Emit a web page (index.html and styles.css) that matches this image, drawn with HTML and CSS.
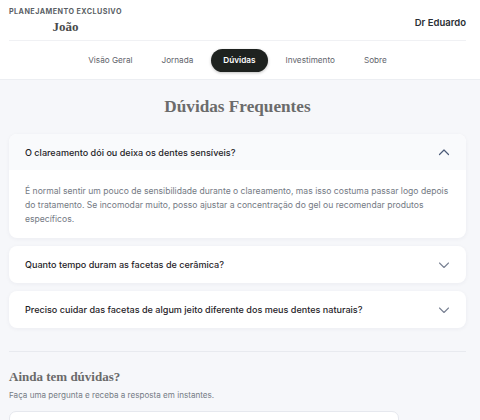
FILE: index.html
```html
<!DOCTYPE html>
<html lang="pt">
<head>
<meta charset="utf-8">
<link rel="stylesheet" href="styles.css">
</head>
<body>
<header class="header">
  <div class="top">
    <div class="brand">
      <div class="eyebrow">PLANEJAMENTO EXCLUSIVO</div>
      <div class="name">João</div>
    </div>
    <div class="doctor">Dr Eduardo</div>
  </div>
  <nav class="nav">
    <a class="tab">Visão Geral</a>
    <a class="tab">Jornada</a>
    <a class="tab active">Dúvidas</a>
    <a class="tab">Investimento</a>
    <a class="tab">Sobre</a>
  </nav>
</header>
<main class="main">
  <h1 class="title">Dúvidas Frequentes</h1>
  <div class="faq">
    <div class="card open">
      <div class="q">
        <span>O clareamento dói ou deixa os dentes sensíveis?</span>
        <svg class="chev" width="12" height="8" viewBox="0 0 12 8"><path d="M1.5 6.5 L6 2 L10.5 6.5" fill="none" stroke="#4b5a78" stroke-width="1.2" stroke-linecap="round" stroke-linejoin="round"/></svg>
      </div>
      <div class="a">É normal sentir um pouco de sensibilidade durante o clareamento, mas isso costuma passar logo depois do tratamento. Se incomodar muito, posso ajustar a concentração do gel ou recomendar produtos específicos.</div>
    </div>
    <div class="card">
      <div class="q">
        <span>Quanto tempo duram as facetas de cerâmica?</span>
        <svg class="chev" width="12" height="8" viewBox="0 0 12 8"><path d="M1.5 2 L6 6.5 L10.5 2" fill="none" stroke="#7a8294" stroke-width="1.1" stroke-linecap="round" stroke-linejoin="round"/></svg>
      </div>
    </div>
    <div class="card">
      <div class="q">
        <span>Preciso cuidar das facetas de algum jeito diferente dos meus dentes naturais?</span>
        <svg class="chev" width="12" height="8" viewBox="0 0 12 8"><path d="M1.5 2 L6 6.5 L10.5 2" fill="none" stroke="#7a8294" stroke-width="1.1" stroke-linecap="round" stroke-linejoin="round"/></svg>
      </div>
    </div>
  </div>
  <hr class="divider">
  <section class="ask">
    <h2 class="ask-title">Ainda tem dúvidas?</h2>
    <p class="ask-sub">Faça uma pergunta e receba a resposta em instantes.</p>
    <div class="input"></div>
  </section>
</main>
</body>
</html>
```
FILE: styles.css
```css
* { box-sizing: border-box; }
html, body { margin: 0; padding: 0; }
body {
  background: #f6f7fa;
  font-family: "Inter", "Noto Sans", sans-serif;
  color: #1f2328;
  width: 480px;
  height: 420px;
  overflow: hidden;
}
.header {
  background: #ffffff;
  padding: 0 14px 0 9px;
  border-bottom: 1px solid #eceef2;
}
.top {
  height: 41px;
  display: flex;
  justify-content: space-between;
  align-items: center;
  border-bottom: 1px solid #f0f1f4;
}
.brand {
  display: flex;
  flex-direction: column;
  align-items: center;
  padding-top: 2px;
}
.eyebrow {
  font-size: 7.2px;
  font-weight: 700;
  letter-spacing: 0.45px;
  color: #5a5f66;
  line-height: 10px;
}
.name {
  font-family: "Liberation Serif", "DejaVu Serif", serif;
  font-weight: 700;
  font-size: 13px;
  color: #4a4a4a;
  line-height: 16px;
  margin-top: 2px;
}
.doctor {
  font-size: 9.5px;
  font-weight: 600;
  color: #2a2d33;
  padding-top: 4px;
}
.nav {
  height: 38px;
  display: flex;
  justify-content: center;
  align-items: center;
  gap: 7px;
}
.tab {
  font-size: 8.2px;
  color: #5f646c;
  padding: 0 11px;
  height: 23px;
  line-height: 23px;
  border-radius: 12px;
}
.tab.active {
  background: #1e221f;
  color: #ffffff;
  font-weight: 600;
  padding: 0 12px;
  box-shadow: 0 1px 3px rgba(0,0,0,0.25);
}
.main {
  padding: 0 14px 0 9px;
}
.title {
  margin: 0;
  height: 54px;
  line-height: 54px;
  text-align: center;
  font-family: "Liberation Serif", "DejaVu Serif", serif;
  font-weight: 700;
  font-size: 17.2px;
  color: #6b6b6b;
}
.faq {
  display: flex;
  flex-direction: column;
  gap: 8px;
}
.card {
  background: #ffffff;
  border-radius: 8px;
  box-shadow: 0 1px 4px rgba(30,40,70,0.05);
  overflow: hidden;
}
.q {
  height: 37px;
  padding: 0 16px;
  display: flex;
  justify-content: space-between;
  align-items: center;
  font-size: 9.07px;
  font-weight: 500;
  color: #1f2328;
}
.card.open .q { background: #f9fafc; height: 36px; }
.a {
  padding: 14px 16px 12px;
  font-size: 8.6px;
  line-height: 14px;
  color: #747a84;
}
.divider {
  border: 0;
  border-top: 1px solid #e8eaef;
  margin: 23px 0 0;
}
.ask { padding-top: 16px; }
.ask-title {
  margin: 0;
  font-family: "Liberation Serif", "DejaVu Serif", serif;
  font-size: 13px;
  font-weight: 700;
  color: #6a6a6a;
  line-height: 18px;
}
.ask-sub {
  margin: 3px 0 0;
  font-size: 8.1px;
  color: #757b85;
  line-height: 12px;
}
.input {
  margin-top: 10px;
  width: 390px;
  height: 30px;
  background: #ffffff;
  border: 1px solid #e6e8ee;
  border-radius: 7px;
}
```
